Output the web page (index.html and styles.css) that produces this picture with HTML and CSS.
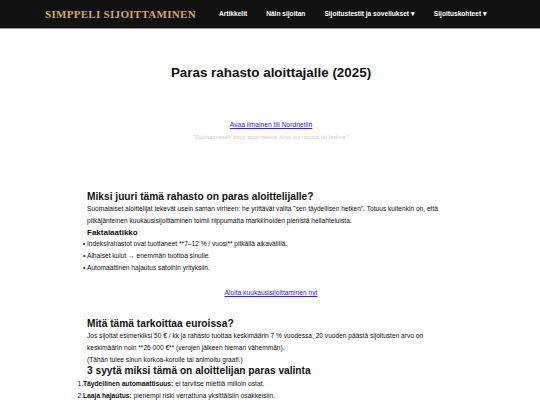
FILE: index.html
```html
<!DOCTYPE html>
<html lang="fi">
<head>
<meta charset="utf-8">
<title>Paras rahasto aloittajalle (2025)</title>
<link rel="stylesheet" href="styles.css">
</head>
<body>
<header class="site-header">
  <div class="header-inner">
    <a class="logo" href="#">SIMPPELI SIJOITTAMINEN</a>
    <nav class="nav">
      <a href="#">Artikkelit</a>
      <a href="#">Näin sijoitan</a>
      <a href="#">Sijoitustestit ja sovellukset ▾</a>
      <a href="#">Sijoituskohteet ▾</a>
    </nav>
  </div>
</header>
<main class="content">
  <h1 class="title">Paras rahasto aloittajalle (2025)</h1>
  <div class="cta">
    <a href="#">Avaa ilmainen tili Nordnetiin</a>
    <p class="disclaimer">"Sijoittamiseen liittyy aina riskejä. Arvo voi nousta tai laskea."</p>
  </div>
  <h2 class="h2-first">Miksi juuri tämä rahasto on paras aloittelijalle?</h2>
  <p>Suomalaiset aloittelijat tekevät usein saman virheen: he yrittävät valita "sen täydellisen hetken". Totuus kuitenkin on, että pitkäjänteinen kuukausisijoittaminen toimii riippumatta markkinoiden pienistä heilahteluista.</p>
  <h3>Faktalaatikko</h3>
  <ul class="facts">
    <li>Indeksirahastot ovat tuottaneet **7–12 % / vuosi** pitkällä aikavälillä.</li>
    <li>Alhaiset kulut → enemmän tuottoa sinulle.</li>
    <li>Automaattinen hajautus satoihin yrityksiin.</li>
  </ul>
  <div class="cta cta-mid">
    <a href="#">Aloita kuukausisijoittaminen nyt</a>
  </div>
  <h2 class="h2-euro">Mitä tämä tarkoittaa euroissa?</h2>
  <p class="euro-text">Jos sijoitat esimerkiksi 50 € / kk ja rahasto tuottaa keskimäärin 7 % vuodessa, 20 vuoden päästä sijoitusten arvo on keskimäärin noin **26 000 €** (verojen jälkeen hieman vähemmän).<br>(Tähän tulee sinun korkoa-korolle tai animoitu graafi.)</p>
  <h2 class="h2-reasons">3 syytä miksi tämä on aloittelijan paras valinta</h2>
  <ol class="reasons">
    <li><b>Täydellinen automaattisuus:</b> ei tarvitse miettiä milloin ostat.</li>
    <li><b>Laaja hajautus:</b> pienempi riski verrattuna yksittäisiin osakkeisiin.</li>
  </ol>
</main>
</body>
</html>
```
FILE: styles.css
```css
html, body {
  margin: 0;
  padding: 0;
  background: #fff;
  font-family: "Liberation Sans", Arial, sans-serif;
  color: #111;
}
.site-header {
  background: #111;
  height: 28px;
  border-bottom: 1px solid #9a9a9a;
}
.header-inner {
  display: flex;
  align-items: center;
  height: 28px;
  padding-left: 45px;
}
.logo {
  font-family: "Liberation Serif", "Times New Roman", serif;
  font-weight: bold;
  font-size: 11px;
  color: #d4af37;
  text-decoration: none;
  letter-spacing: 0.3px;
}
.nav {
  display: flex;
  gap: 19px;
  margin-left: 23px;
}
.nav a {
  color: #fff;
  font-size: 6.6px;
  font-weight: bold;
  text-decoration: none;
}
.content {
  width: 368px;
  margin: 0 auto;
  padding-left: 2px;
}
.title {
  font-size: 13.4px;
  line-height: 16px;
  text-align: center;
  margin: 36px 0 39px;
}
.cta {
  text-align: center;
  font-size: 6.7px;
  line-height: 10px;
}
.cta a {
  color: #2b2bd8;
}
.disclaimer {
  color: #cfcfcf;
  font-size: 5.8px;
  line-height: 8px;
  margin: 3px 0 0;
}
h2 {
  font-size: 10.2px;
  line-height: 12px;
  margin: 0;
}
.h2-first {
  margin-top: 50px;
}
.h2-euro {
  margin-top: 20px;
}
p {
  font-size: 6.6px;
  line-height: 12px;
  margin: 0;
}
.euro-text {
  line-height: 11.8px;
}
h3 {
  font-size: 8px;
  line-height: 11px;
  margin: 0;
}
.facts, .reasons {
  list-style: none;
  margin: 0;
  padding: 0;
  font-size: 6.6px;
  line-height: 12px;
}
.facts li::before {
  content: "•";
  display: inline-block;
  width: 4px;
  margin-left: -4px;
}
.cta-mid {
  margin-top: 14px;
}
.reasons {
  counter-reset: n;
  margin: 1px 0 0 -4px;
  font-size: 6.7px;
}
.reasons li {
  counter-increment: n;
}
.reasons li::before {
  content: counter(n) ".";
  display: inline-block;
  width: 5.5px;
  margin-left: -5.5px;
}
```
